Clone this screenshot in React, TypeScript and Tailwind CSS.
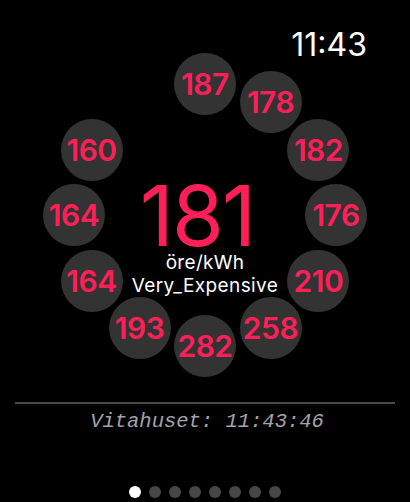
import React from "react";

const prices = [187, 178, 182, 176, 210, 258, 282, 193, 164, 164, 160];

const CX = 205;
const CY = 215;
const R = 131;
const SIZE = 62;

function Bubble({ value, index }: { value: number; index: number }) {
  const a = (index * 30 * Math.PI) / 180;
  const left = CX + R * Math.sin(a) - SIZE / 2;
  const top = CY - R * Math.cos(a) - SIZE / 2;
  return (
    <div
      className="absolute flex h-[62px] w-[62px] items-center justify-center rounded-full bg-[#333333]"
      style={{ left, top }}
    >
      <span className="text-[30px] font-semibold leading-none tracking-[-0.5px] text-[#ff1f58]">
        {value}
      </span>
    </div>
  );
}

export default function App() {
  return (
    <div
      className="flex h-[502px] w-[410px] flex-col overflow-hidden bg-black"
      style={{ fontFamily: "Inter, 'Noto Sans', sans-serif" }}
    >
      <div className="relative h-[392px]">
        {prices.map((p, i) => (
          <Bubble key={i} value={p} index={i} />
        ))}

        <div className="flex justify-end pr-[43px] pt-[29px]">
          <span className="text-[32px] leading-none text-white">11:43</span>
        </div>

        <div className="mt-[121px] flex flex-col items-center">
          <span className="pr-[16px] text-[84px] font-normal leading-[68px] tracking-[-2px] text-[#ff1f58]">
            181
          </span>
          <span className="mt-[1px] text-[19px] leading-[23px] tracking-[0.3px] text-white">
            öre/kWh
          </span>
          <span className="text-[19px] leading-[23px] tracking-[0.4px] text-white">
            Very_Expensive
          </span>
        </div>
      </div>

      <div className="mx-[15px] mt-[10px] h-[2px] bg-[#4a4a4a]" />

      <div
        className="mt-[6px] pl-[4px] text-center text-[20.5px] italic leading-[24px] text-[#a3a3a8]"
        style={{ fontFamily: "'Liberation Mono', 'DejaVu Sans Mono', monospace" }}
      >
        Vitahuset: 11:43:46
      </div>

      <div className="mt-[52px] flex justify-center gap-[8px]">
        {Array.from({ length: 8 }).map((_, i) => (
          <span
            key={i}
            className={`h-[12px] w-[12px] rounded-full ${i === 0 ? "bg-white" : "bg-[#474747]"}`}
          />
        ))}
      </div>
    </div>
  );
}
